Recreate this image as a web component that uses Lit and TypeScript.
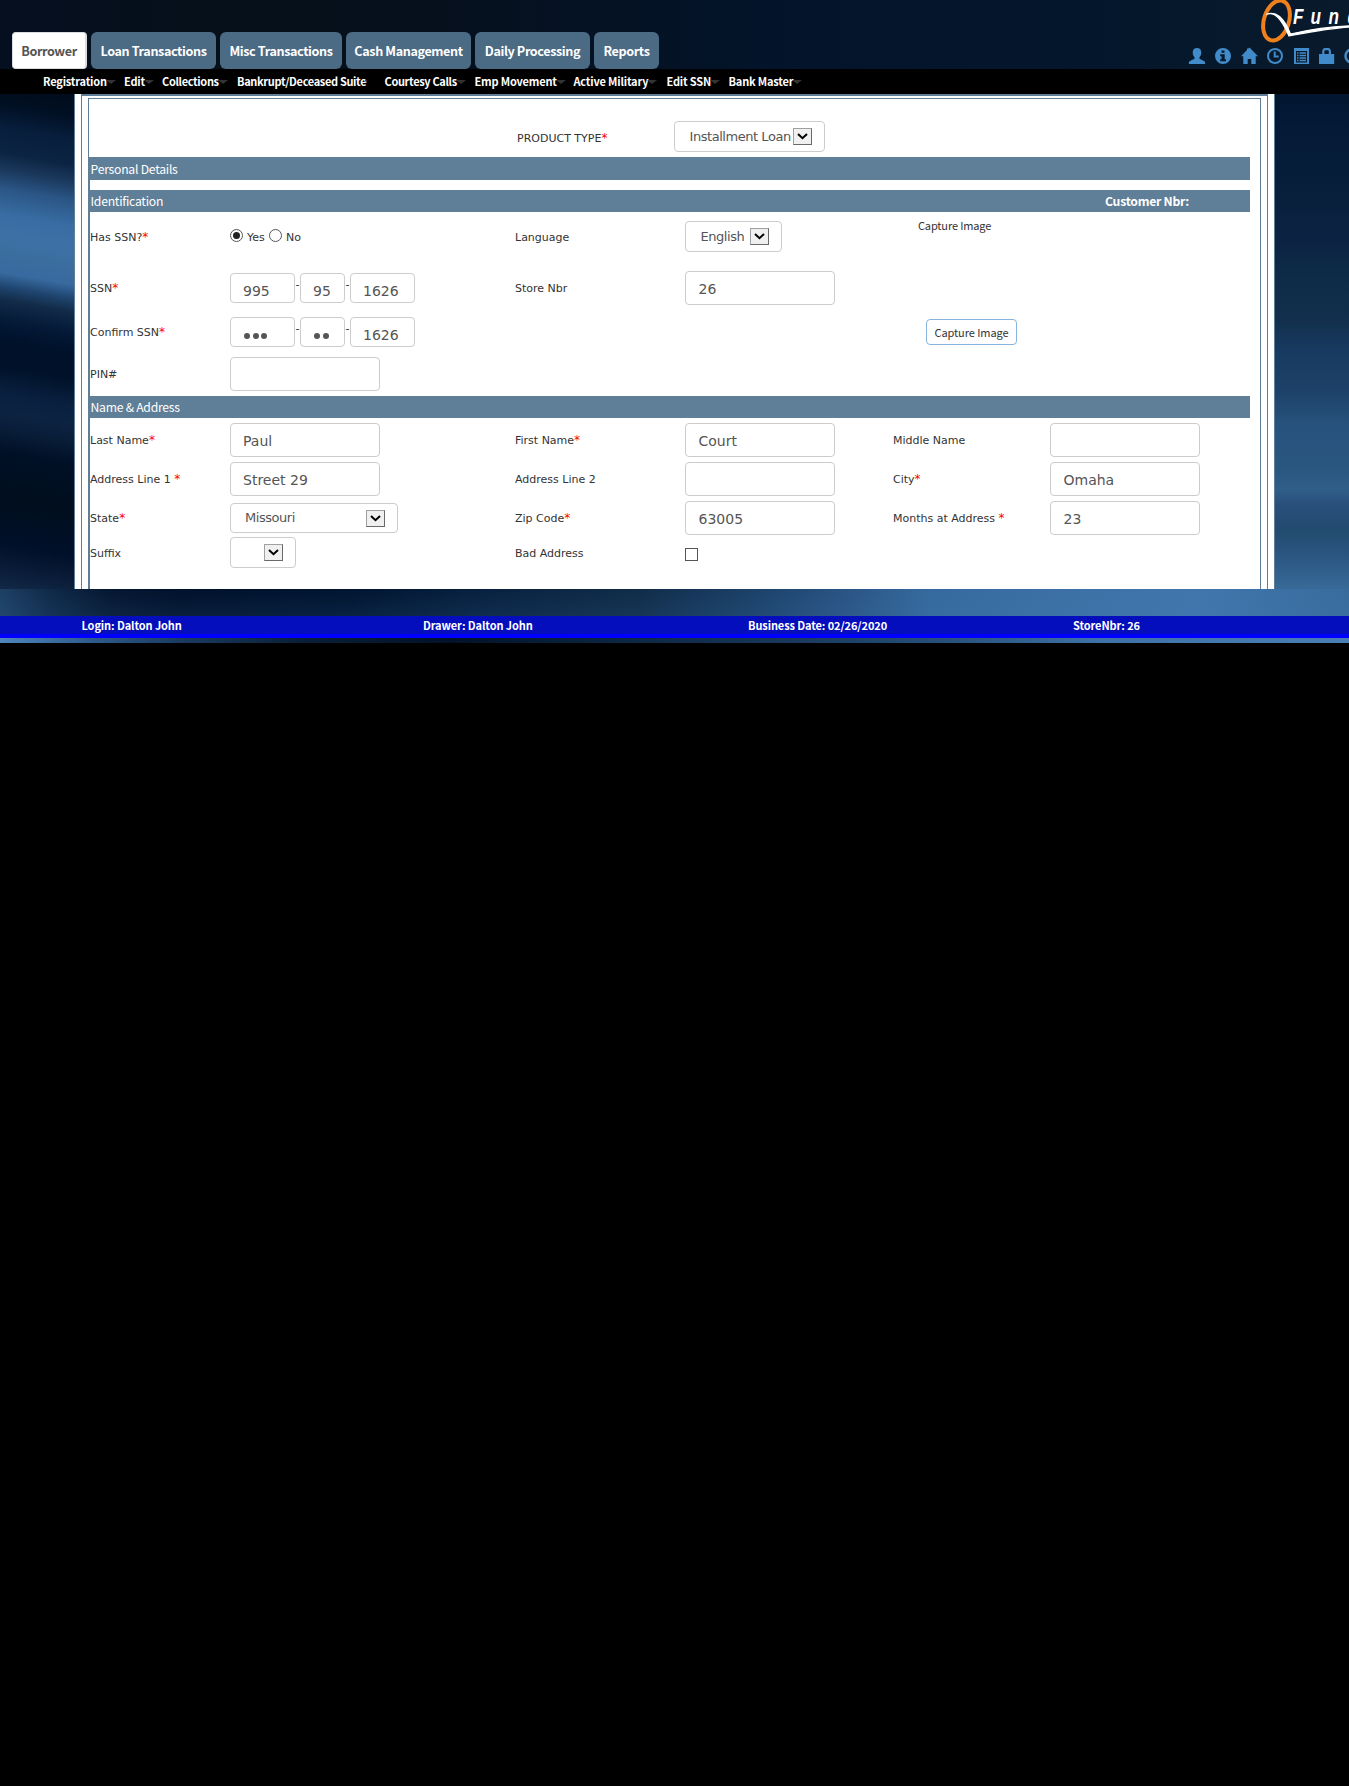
import { LitElement, html, css, svg, nothing } from "lit";
import { customElement, property } from "lit/decorators.js";

@customElement("q-select")
class QSelect extends LitElement {
  @property() value = "";
  static styles = css`
    :host { display: block; box-sizing: border-box; height: 31px; border: 1px solid #ccc; border-radius: 4px;
      background: #fff; width: var(--w, 151px); }
    .in { display: flex; align-items: center; height: 100%; padding: 0 12px 0 var(--pl, 14.5px); box-sizing: border-box;
      justify-content: space-between; }
    .t { font: 13px/16px "DejaVu Sans", sans-serif; color: #555; white-space: nowrap; letter-spacing: var(--ls, -0.45px); }
    .b { flex: none; width: 19px; height: 17px; box-sizing: border-box; background: #f0f0f0; border: 1px solid #a0a0a0;
      border-right-color: #696969; border-bottom-color: #696969; display: flex; align-items: center; justify-content: center; }
    svg { display: block; }
  `;
  render() {
    return html`<div class="in"><span class="t">${this.value}</span><span class="b"><svg width="11" height="7" viewBox="0 0 11 7"><path d="M1 1 L5.5 5.2 L10 1" fill="none" stroke="#000" stroke-width="2"/></svg></span></div>`;
  }
}

@customElement("q-field")
class QField extends LitElement {
  @property() value = "";
  static styles = css`
    :host { display: block; box-sizing: border-box; width: var(--w, 150px); height: var(--h, 34px); border: 1px solid #ccc;
      border-radius: 4px; background: #fff; padding: var(--pt, 8px) 0 0 var(--pl, 12.5px);
      font: 14px/18px "DejaVu Sans", sans-serif; color: #555; white-space: nowrap; }
    .dots { display: flex; gap: 2.5px; padding: 7px 0 0 1px; }
    .dot { width: 6px; height: 6px; border-radius: 50%; background: #555; }
  `;
  render() {
    if (/^•+$/.test(this.value))
      return html`<div class="dots">${[...this.value].map(() => html`<span class="dot"></span>`)}</div>`;
    return html`${this.value}`;
  }
}

const TABS: [string, string][] = [
  ["Borrower", "t0"], ["Loan Transactions", "t1"], ["Misc Transactions", "t2"],
  ["Cash Management", "t3"], ["Daily Processing", "t4"], ["Reports", "t5"],
];
const MENU: [string, string][] = [
  ["Registration", "m0"], ["Edit", "m1"], ["Collections", "m2"], ["Bankrupt/Deceased Suite", "m3"],
  ["Courtesy Calls", "m4"], ["Emp Movement", "m5"], ["Active Military", "m6"], ["Edit SSN", "m7"], ["Bank Master", "m8"],
];
const STATUS: [string, string][] = [
  ["Login: Dalton John", "s0"], ["Drawer: Dalton John", "s1"], ["Business Date: 02/26/2020", "s2"], ["StoreNbr: 26", "s3"],
];

@customElement("app-root")
class AppRoot extends LitElement {
  static styles = css`
    :host { display: block; width: 1349px; height: 1786px; background: #000; overflow: hidden;
      font-family: "Noto Sans CJK SC", "Open Sans", sans-serif; }
    * { box-sizing: border-box; }
    .header { height: 69px; display: flex; justify-content: space-between;
      background: linear-gradient(90deg, #060f20 0, #05101a 220px, #06101d 440px, #03142b 800px, #04162c 1050px, #081a2b 1349px); }
    .tabs { display: flex; padding: 32px 0 0 12px; gap: 4px; }
    .tab { height: 37px; border-radius: 6px; background: #4b6a84; color: #fff; font-weight: 700; font-size: 12.6px;
      letter-spacing: -.38px; line-height: 37px; text-align: center; white-space: nowrap; }
    .t0 { width: 75px; background: #fff; color: #555; border: solid #d8dde2; border-width: 1px 2px 1px 1px; border-radius: 4px;
      line-height: 35px; }
    .t1 { width: 125px; } .t2 { width: 122px; } .t3 { width: 125px; } .t4 { width: 115px; } .t5 { width: 65px; }
    .brand { width: 200px; height: 69px; display: block; }
    .menu { height: 25px; background: #000; display: flex; padding-left: 43px; }
    .mi { display: flex; align-items: center; color: #fff; font-weight: 700; font-size: 11px; letter-spacing: -.18px;
      line-height: 25px; white-space: nowrap; }
    .mi::after { content: ""; border: 5px solid transparent; border-top: 4px solid #333; border-bottom: 0; margin-left: -1px; }
    .m0 { width: 81px; } .m1 { width: 38px; } .m2 { width: 75px; } .m3 { width: 147.5px; } .m4 { width: 90px; }
    .m5 { width: 99px; } .m6 { width: 93px; } .m7 { width: 62px; }
    .m2, .m3, .m4 { letter-spacing: -.34px; }
    .m3::after { border-width: 3px 1px 0; }
    .stage { display: flex; height: 495px; }
    .gl { width: 74px; background: linear-gradient(190deg, #000c1a 0, #000f22 20px, #071e3c 45px, #0c2443 70px, #193659 85px,
      #2a5585 105px, #386ca2 130px, #3d71a6 150px, #3b6d9f 170px, #386aa0 188px, #1f456f 202px, #122b48 215px, #041a38 235px,
      #00112a 255px, #001229 280px, #0a2040 308px, #0c2342 325px, #081c36 345px, #001026 365px, #000e1d 410px, #00102a 455px,
      #0a1c38 480px, #14304e 510px); }
    .gr { width: 74px; background: linear-gradient(180deg, #02162f 0, #041a38 36px, #08203c 106px, #0d2344 150px, #0c2945 171px,
      #12304d 226px, #173a60 256px, #1d4168 296px, #26527d 330px, #2a5780 376px, #2f5e89 396px, #284f7a 411px, #234b70 436px,
      #2a5580 460px, #386a98 495px); }
    .panel { width: 1201px; background: #fff; border: solid #5f7e97; border-width: 0 1px; padding: 0 6px; overflow: hidden; }
    .mid { border: solid #5f7e97; border-width: 2px 1px 0; padding: 2px 6px 0; height: 100%; }
    .inner { border: solid #5f7e97; border-width: 1px 1px 0; height: 100%; }
    .form { width: 1161px; }
    .prod { height: 58px; display: flex; padding: 22px 0 0 428px; }
    .prod .lb { width: 157px; line-height: 31px; }
    .sect { border-left: 1px solid #5f7e97; height: 433px; }
    .bar { height: 22px; background: #5f7e97; color: #fff; font-size: 12.2px; letter-spacing: -.25px; line-height: 23px;
      padding-left: .5px; display: flex; justify-content: space-between; }
    .bar1 { height: 23px; margin-bottom: 10px; line-height: 25px; }
    .bar b { padding-right: 61px; }
    .row { display: grid; grid-template-columns: 140px 285px 170px 208px 157px 1fr; align-items: center; }
    .lb { font: 11px/16px "DejaVu Sans", sans-serif; color: #333; white-space: nowrap; padding-top: 2px; }
    .lb i { color: red; font: 12px/12px "DejaVu Sans", sans-serif; }
    .r1 { height: 49px; } .r2 { height: 54px; } .r3 { height: 34px; } .r4 { height: 47px; padding-top: 3px; }
    .n1 { height: 39px; margin-top: 2.5px; } .n2, .n3 { height: 39px; } .n4 { height: 31px; margin-top: -.5px; }
    .radios { display: flex; align-items: center; height: 18px; margin-top: -2px;
      font: 11px/18px "DejaVu Sans", sans-serif; color: #333; }
    .radio { width: 13px; height: 13px; border: 1px solid #555; border-radius: 50%; display: flex; align-items: center; justify-content: center; }
    .radio.on::after { content: ""; width: 7px; height: 7px; border-radius: 50%; background: #222; }
    .radios span.rt { padding: 5px 0 0 4px; width: 26px; }
    .ssn { display: flex; }
    .ssn .d { width: 5px; font: 11px/12px "DejaVu Sans", sans-serif; color: #333; padding-top: 6px; text-align: center; }
    .short { --h: 30px; --pt: 8px; --pl: 12px; --w: 65px; }
    .two { --w: 45px; }
    .narrow { --pl: 12px; }
    .cap { font-size: 11px; letter-spacing: -.15px; line-height: 16px; color: #333; align-self: start; padding: 5px 0 0 25px;
      white-space: nowrap; }
    .btn { width: 91px; height: 26px; margin-left: 33px; border: 1px solid #86b4dc; border-radius: 4px; font-size: 11px;
      letter-spacing: -.08px; line-height: 24px; text-align: center; color: #333; white-space: nowrap; }
    .sl { --w: 97px; } .ss { --w: 168px; --pl: 14px; height: 30px; } .sx { --w: 66px; }
    .chk { width: 13px; height: 13px; border: 1px solid #555; margin-top: 4px; }
    .low { height: 27px; background: linear-gradient(180deg, transparent, #3f78b022),
      linear-gradient(90deg, #1d4064 0, #0f2948 50px, #051730 110px, #00112a 180px, #001530 350px, #08203f 480px, #102c48 640px, #1b4068 750px,
      #2a5585 850px, #366a9e 930px, #3c70a5 1050px, #4076ac 1200px, #396b9d 1349px); }
    .status { height: 22px; background: #040ebd; border-bottom: 4px solid #00f; display: flex; padding-left: 81.5px;
      color: #fff; font-weight: 700; font-size: 11px; letter-spacing: -.1px; line-height: 19px; white-space: nowrap; }
    .s0 { width: 341.5px; } .s1 { width: 325px; } .s2 { width: 325px; }
    .edge { height: 5px; background: linear-gradient(90deg, #4f86bd 0, #2f5c8c 90px, #1b3c60 180px, #0a2038 300px, #021329 450px, #0b2540 600px,
      #18385a 780px, #28527c 950px, #3f73a7 1100px, #4a7fb6 1349px); }
  `;

  label(t: string, req = false) {
    return html`<span class="lb">${t}${req ? html`<i>*</i>` : nothing}</span>`;
  }

  brand() {
    return html`<svg class="brand" viewBox="1149 0 200 69">
      <ellipse cx="1276.5" cy="20.5" rx="12.5" ry="20.5" transform="rotate(17 1276.5 20.5)" fill="none" stroke="#f0801c" stroke-width="4"/>
      <path d="M1266 14.5 C1275 10.5 1282 20 1289 36 C1310 32 1330 28 1350 27 L1350 25.8 C1330 26.5 1308 30 1290.5 34 C1284 18 1276 10 1266 14.5Z"
        fill="#fff" stroke="#fff" stroke-width="1.2"/>
      <g fill="#fff" font-family="Liberation Sans Narrow, Liberation Sans, sans-serif" font-weight="700" font-style="italic" font-size="22">
        ${[["F", 1293], ["u", 1310.5], ["n", 1328.5], ["d", 1347.5]].map(
          ([c, x]) => svg`<text transform="translate(${x} 24) scale(.78 1)">${c}</text>`)}
      </g>
      <g fill="#428bca">
        <path d="M1197 48c3 0 4.300 2 4.300 4.600 0 2-.8 3.700-1.800 4.700v1.500l4.500 2.200c.8.4 1.200 1 1.200 3h-16.400c0-2 .4-2.600 1.200-3l4.500-2.200v-1.500c-1-1-1.800-2.700-1.800-4.700C1192.700 50 1194 48 1197 48z"/>
        <path fill-rule="evenodd" d="M1223 48a8 8 0 1 0 0 16 8 8 0 0 0 0-16zM1221.500 50.500h3v2.300h-3zM1220.200 54.300h4.500v5h1.300v1.900h-5.800v-1.900h1.300v-3h-1.300z"/>
        <path d="M1249.500 47.500l8.500 8.700h-2.300V64h-4.400v-5h-3.600v5h-4.400v-7.800h-2.300l6-6.200v-1.500h1.500z"/>
        <path d="M1294 48h15v16h-15z"/>
        <path fill-rule="evenodd" d="M1319 54h3.200v-2c0-2.500 1.200-4 2.700-4h3.400c1.500 0 2.700 1.500 2.700 4v2h3.200v10h-15.200zM1324.400 54h4.400v-2.300c0-1-.4-1.500-1-1.500h-2.400c-.6 0-1 .5-1 1.500z"/>
      </g>
      <g fill="none" stroke="#428bca" stroke-width="2">
        <circle cx="1275" cy="56" r="7"/><path d="M1274.700 51.500v5h4"/>
        <circle cx="1352" cy="56" r="6.500" stroke-width="2.500"/>
      </g>
      <path d="M1296 51h11v11.500h-11z" fill="#081a2b"/>
      <path d="M1297 53h1.500M1299.500 53h6.500M1297 55.500h1.500M1299.500 55.500h6.500M1297 58h1.500M1299.500 58h6.500M1297 60.500h1.500M1299.500 60.500h6.500"
        stroke="#428bca" stroke-width="1.300"/>
    </svg>`;
  }

  ssn(a: string, b: string, c: string) {
    return html`<div class="ssn"><q-field class="short" .value=${a}></q-field><span class="d">-</span>
      <q-field class="short two" .value=${b}></q-field><span class="d">-</span>
      <q-field class="short" .value=${c}></q-field></div>`;
  }

  render() {
    return html`
      <div class="header">
        <div class="tabs">${TABS.map(([t, c]) => html`<div class="tab ${c}">${t}</div>`)}</div>
        ${this.brand()}
      </div>
      <div class="menu">${MENU.map(([t, c]) => html`<div class="mi ${c}">${t}</div>`)}</div>
      <div class="stage">
        <div class="gl"></div>
        <div class="panel"><div class="mid"><div class="inner"><div class="form">
          <div class="prod">${this.label("PRODUCT TYPE", true)}<q-select .value=${"Installment Loan"}></q-select></div>
          <div class="sect">
            <div class="bar bar1">Personal Details</div>
            <div class="bar"><span>Identification</span><b>Customer Nbr:</b></div>
            <div class="row r1">
              ${this.label("Has SSN?", true)}
              <div class="radios"><span class="radio on"></span><span class="rt">Yes</span><span class="radio"></span><span class="rt">No</span></div>
              ${this.label("Language")}<q-select class="sl" .value=${"English"}></q-select>
              <span class="cap">Capture Image</span>
            </div>
            <div class="row r2">
              ${this.label("SSN", true)}${this.ssn("995", "95", "1626")}
              ${this.label("Store Nbr")}<q-field .value=${"26"}></q-field>
            </div>
            <div class="row r3">
              ${this.label("Confirm SSN", true)}${this.ssn("•••", "••", "1626")}
              <span></span><span></span><div class="btn">Capture Image</div>
            </div>
            <div class="row r4">${this.label("PIN#")}<q-field></q-field></div>
            <div class="bar">Name &amp; Address</div>
            <div class="row n1">
              ${this.label("Last Name", true)}<q-field class="narrow" .value=${"Paul"}></q-field>
              ${this.label("First Name", true)}<q-field .value=${"Court"}></q-field>
              ${this.label("Middle Name")}<q-field></q-field>
            </div>
            <div class="row n2">
              ${this.label("Address Line 1 ", true)}<q-field class="narrow" .value=${"Street 29"}></q-field>
              ${this.label("Address Line 2")}<q-field></q-field>
              ${this.label("City", true)}<q-field .value=${"Omaha"}></q-field>
            </div>
            <div class="row n3">
              ${this.label("State", true)}<q-select class="ss" .value=${"Missouri"}></q-select>
              ${this.label("Zip Code", true)}<q-field .value=${"63005"}></q-field>
              ${this.label("Months at Address ", true)}<q-field .value=${"23"}></q-field>
            </div>
            <div class="row n4">
              ${this.label("Suffix")}<q-select class="sx"></q-select>
              ${this.label("Bad Address")}<span class="chk"></span>
            </div>
          </div>
        </div></div></div></div>
        <div class="gr"></div>
      </div>
      <div class="low"></div>
      <div class="status">${STATUS.map(([t, c]) => html`<span class=${c}>${t}</span>`)}</div>
      <div class="edge"></div>
    `;
  }
}
